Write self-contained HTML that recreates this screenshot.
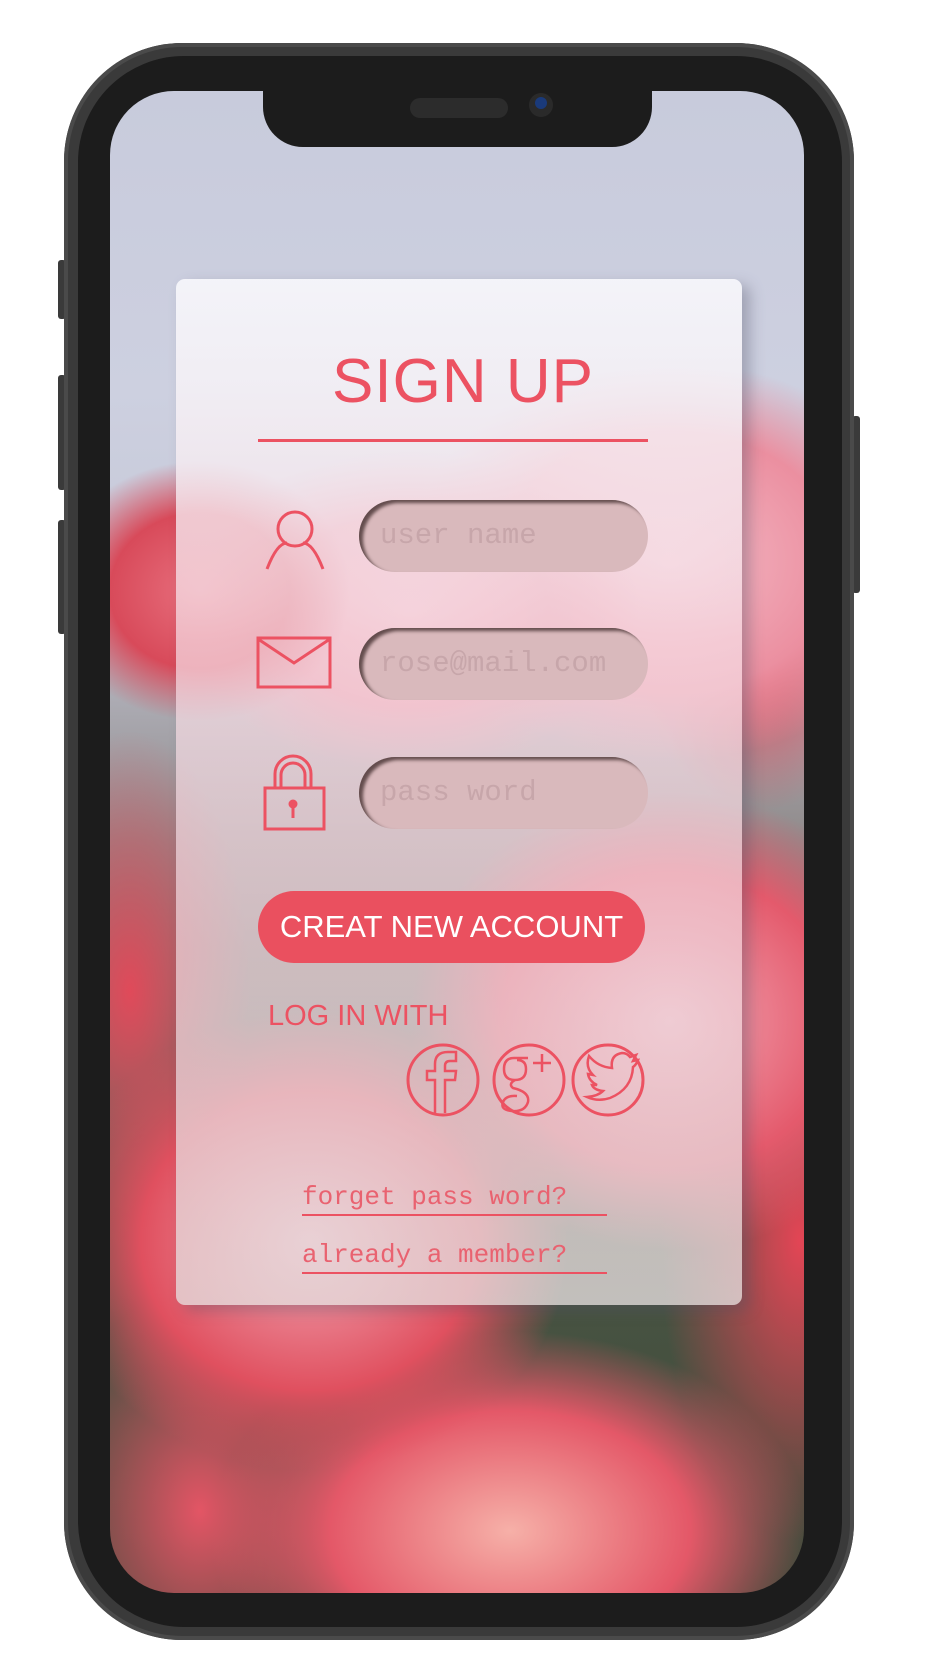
<!DOCTYPE html>
<html><head><meta charset="utf-8"><style>
*{margin:0;padding:0;box-sizing:border-box}
body{width:926px;height:1680px;background:#fff;position:relative;overflow:hidden;font-family:"Liberation Sans",sans-serif}
.phone{position:absolute;left:64px;top:43px;width:790px;height:1597px;border-radius:118px;background:#3a3a3a;box-shadow:inset 0 0 0 4px #4a4a4a}
.inner{position:absolute;left:78px;top:56px;width:764px;height:1571px;border-radius:106px;background:#1c1c1c}
.btn{position:absolute;background:#3a3a3a;border-radius:3px}
.screen{position:absolute;left:110px;top:91px;width:694px;height:1502px;border-radius:64px;overflow:hidden;
background:
radial-gradient(ellipse 150px 130px at 90px 500px,#e8707e 0%,#d84a5a 60%,rgba(220,70,90,0) 100%),
radial-gradient(ellipse 230px 160px at 300px 520px,#f3b0be 0%,#e88a9c 60%,rgba(230,100,120,0) 100%),
radial-gradient(ellipse 260px 200px at 560px 470px,#f5bcc8 0%,#eb8fa0 65%,rgba(230,100,120,0) 100%),
radial-gradient(ellipse 120px 160px at 650px 560px,#e24656 0%,rgba(210,60,70,0) 100%),
radial-gradient(ellipse 260px 230px at 560px 930px,#f3aab8 0%,#e45a6c 65%,rgba(220,70,90,0) 100%),
radial-gradient(ellipse 260px 230px at 200px 1150px,#f2a8b6 0%,#e0505f 65%,rgba(220,70,90,0) 100%),
radial-gradient(ellipse 120px 260px at 20px 900px,#e04a5a 0%,rgba(220,70,90,0) 100%),
radial-gradient(ellipse 300px 200px at 400px 1440px,#f6b0a8 0%,#e45868 60%,rgba(220,70,90,0) 100%),
radial-gradient(ellipse 140px 300px at 690px 1150px,#e34555 0%,rgba(200,50,60,0) 100%),
radial-gradient(ellipse 160px 220px at 90px 1420px,#e35565 0%,rgba(200,50,60,0) 100%),
linear-gradient(180deg,#c8cbdc 0%,#cdd0e0 20%,#c6c9d8 32%,#8f8a8a 50%,#4a5544 75%,#3f4a3a 100%)}
.notch{position:absolute;left:263px;top:91px;width:389px;height:56px;background:#1c1c1c;border-radius:0 0 40px 40px}
.card{position:absolute;left:176px;top:279px;width:566px;height:1026px;border-radius:9px;
background:linear-gradient(180deg,rgba(245,245,250,0.96) 0%,rgba(245,240,245,0.88) 12%,rgba(246,220,228,0.72) 35%,rgba(240,215,222,0.7) 65%,rgba(228,222,222,0.78) 100%);box-shadow:8px 6px 14px rgba(80,80,100,0.35)}
.title{position:absolute;left:0;width:926px;top:344px;text-align:center;color:#ec5262;font-size:62px;font-family:"Liberation Sans",sans-serif;letter-spacing:1px;line-height:76px}
.hr{position:absolute;left:258px;top:439px;width:390px;height:3px;background:#ec5262}
.inp{position:absolute;left:359px;width:289px;height:72px;border-radius:36px;background:#d9b9bc;box-shadow:inset 4px 3px 3px rgba(60,40,40,0.75);font-family:"Liberation Mono",monospace;font-size:29px;color:#c7a6aa;padding-left:21px;line-height:72px}
.cbtn{position:absolute;left:258px;top:891px;width:387px;height:72px;border-radius:36px;background:#ea505f;color:#fff;text-align:center;line-height:72px;font-size:31px;font-family:"Liberation Sans",sans-serif}
.log{position:absolute;left:268px;top:1000px;color:#ec5262;font-size:29px;font-family:"Liberation Sans",sans-serif}
.lk{position:absolute;left:302px;width:305px;font-family:"Liberation Mono",monospace;font-size:26px;color:#e96270;border-bottom:2px solid #ec5262;line-height:34px;white-space:nowrap}
svg{position:absolute}
</style></head><body>
<div class="btn" style="left:58px;top:260px;width:8px;height:59px"></div>
<div class="btn" style="left:58px;top:375px;width:8px;height:115px"></div>
<div class="btn" style="left:58px;top:520px;width:8px;height:114px"></div>
<div class="btn" style="left:852px;top:416px;width:8px;height:177px"></div>
<div class="phone"></div>
<div class="inner"></div>
<div class="screen"></div>
<div class="notch"></div>
<div style="position:absolute;left:410px;top:98px;width:98px;height:20px;border-radius:10px;background:#2c2c2c"></div>
<div style="position:absolute;left:529px;top:93px;width:24px;height:24px;border-radius:12px;background:#2a2a2a"></div>
<div style="position:absolute;left:535px;top:97px;width:12px;height:12px;border-radius:6px;background:#1a3a7a"></div>
<div class="card"></div>
<div class="title">SIGN UP</div>
<div class="hr"></div>
<svg style="left:255px;top:505px" width="80" height="65" viewBox="0 0 80 65" fill="none" stroke="#ec5262" stroke-width="3"><circle cx="40" cy="24" r="17"/><path d="M12 64 Q22 38 32 38 M68 64 Q58 38 48 38"/></svg>
<svg style="left:256px;top:636px" width="77" height="55" fill="none" stroke="#ec5262" stroke-width="3"><rect x="2" y="2" width="72" height="49"/><path d="M2 3 L38 27 L74 3"/></svg>
<svg style="left:262px;top:754px" width="66" height="78" fill="none" stroke="#ec5262" stroke-width="3"><path d="M13 34 V20 A18 18 0 0 1 49 20 V34 M19 34 V21 A12 12 0 0 1 43 21 V34"/><rect x="3" y="34" width="59" height="41"/><circle cx="31" cy="50" r="3" fill="#ec5262"/><path d="M31 50 V64"/></svg>
<div class="inp" style="top:500px">user name</div>
<div class="inp" style="top:628px">rose@mail.com</div>
<div class="inp" style="top:757px">pass word</div>
<div class="cbtn">CREAT NEW ACCOUNT</div>
<div class="log">LOG IN WITH</div>
<svg style="left:400px;top:1040px" width="260" height="82" fill="none" stroke="#ec5262" stroke-width="3">
<circle cx="43" cy="40" r="35"/><circle cx="129" cy="40" r="35"/><circle cx="208" cy="40" r="35"/>
<path d="M35 73 V40 H27 V31 H35 V24 Q35 12 48 12 H56 V21 H50 Q45 21 45 26 V31 H56 L55 40 H45 V73" stroke-width="2.5"/>
<path d="M128 18 H114 Q104 18 104 29 Q104 40 115 40 Q126 40 126 29 Q126 20 117 20 M115 40 Q108 44 113 48 Q130 52 128 62 Q125 72 112 71 Q100 70 103 62 Q106 55 117 56 M142 14 V32 M133 23 H151" stroke-width="2.5"/>
<path d="M189 16 Q198 27 212 28 Q210 15 222 13 Q227 13 230 17 L236 15 L233 21 L238 20 Q236 25 233 27 Q232 49 210 58 Q198 62 187 57 Q198 56 203 51 Q194 50 192 45 L197 45 Q189 41 188 34 L193 35 Q185 27 189 16 Z" stroke-width="2.5"/>
</svg>
<div class="lk" style="top:1180px">forget pass word?</div>
<div class="lk" style="top:1238px">already a member?</div>
</body></html>
